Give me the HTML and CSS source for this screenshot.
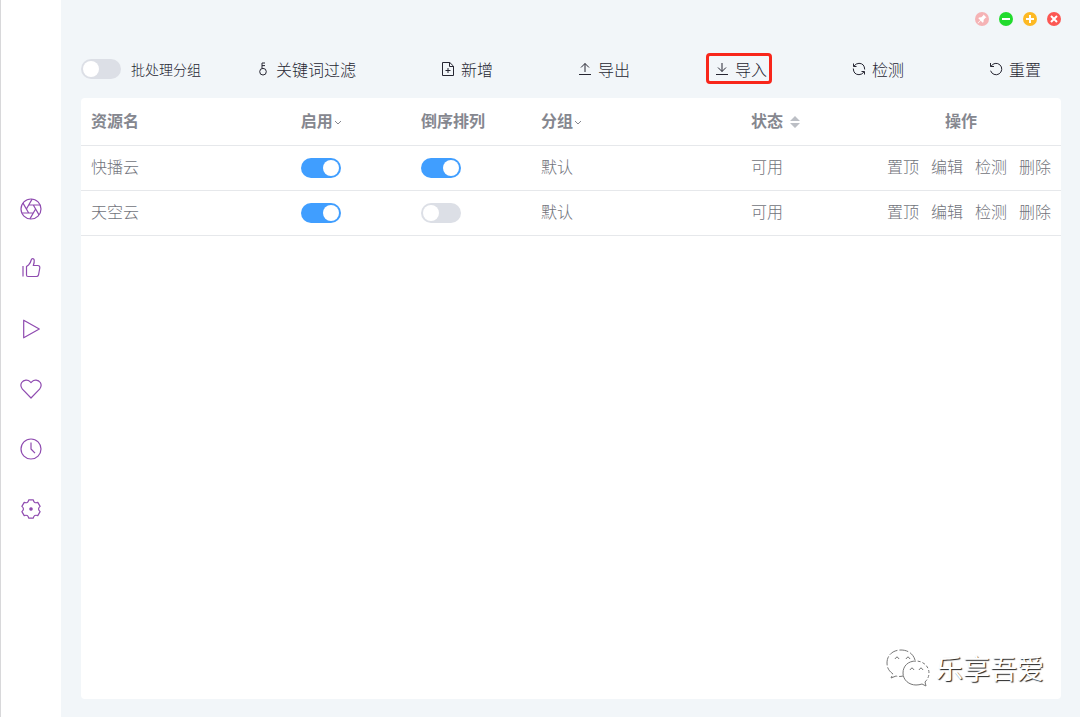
FILE: index.html
```html
<!DOCTYPE html>
<html lang="zh-CN">
<head>
<meta charset="utf-8">
<title>资源管理</title>
<link rel="stylesheet" href="styles.css">
</head>
<body>
<div class="app">
  <nav class="sidebar">
    <button class="nav-item" aria-label="浏览"><svg class="icon-lg" viewBox="-11 -11 22 22"><circle r="10"/><path d="M-2.300-4H9.100M2.300-4 8 5.900M4.600 0-1.100 9.900M2.300 4H-9.100M-2.300 4-8-5.900M-4.600 0 1.100-9.900"/></svg></button>
    <button class="nav-item" aria-label="推荐"><svg class="icon-lg" viewBox="0 0 22 22"><path d="M3 8v10.500M6.500 8.500v8.500q0 1.500 1.500 1.500h8.500q1.500 0 2-1.500l1.300-7q.2-2.500-2-2.500h-4.500q1.200-3 .9-5.500-.3-1.400-1.500-1.400-1.200 0-1.500 1.400-.7 3.300-2.700 5z"/></svg></button>
    <button class="nav-item" aria-label="播放"><svg class="icon-lg" viewBox="0 0 22 22"><path d="M3.700 2.200v17.600L19.300 11z"/></svg></button>
    <button class="nav-item" aria-label="收藏"><svg class="icon-lg" viewBox="0 0 22 22"><path d="M11 20 2.400 11.200C.7 9 .5 6.500 1.700 4.500c2-3 6.300-3.200 8.300-.8l1 1 1-1c2-2.400 6.300-2.200 8.300.8 1.200 2 1 4.500-.7 6.700z"/></svg></button>
    <button class="nav-item" aria-label="历史"><svg class="icon-lg" viewBox="0 0 22 22"><circle cx="11" cy="11" r="10"/><path d="M11 4.500V11l4 4.200"/></svg></button>
    <button class="nav-item" aria-label="设置"><svg class="icon-lg" viewBox="-11 -11 22 22"><path d="M9.100 2.600Q6 0 9.100-2.600L6.800-6.600Q3-5.200 2.300-9.200H-2.300Q-3-5.200-6.800-6.600L-9.100-2.600Q-6 0-9.100 2.600L-6.800 6.600Q-3 5.200-2.300 9.200H2.300Q3 5.200 6.800 6.600z"/><circle class="solid" r="1.200"/></svg></button>
  </nav>
  <main class="main">
    <header class="titlebar">
      <button class="win pin" aria-label="固定"><svg viewBox="0 0 14 14"><path class="white-fill" d="m8.500 2.500 3 3-1 .3-1.800 1.900-.2 2.300-.8.700-2-2L3 11.400l-.4-.4 2.700-2.700-2-2 .7-.8 2.300-.2 1.900-1.800z"/></svg></button>
      <button class="win min" aria-label="最小化"><svg viewBox="0 0 14 14"><path d="M3 7h8"/></svg></button>
      <button class="win max" aria-label="最大化"><svg viewBox="0 0 14 14"><path d="M3 7h8M7 3v8"/></svg></button>
      <button class="win close" aria-label="关闭"><svg viewBox="0 0 14 14"><path d="m4 4 6 6m0-6-6 6"/></svg></button>
    </header>
    <div class="toolbar">
      <label class="batch"><input class="switch" type="checkbox"><span>批处理分组</span></label>
      <button class="tool"><svg class="icon" viewBox="0 0 14 14"><circle cx="7" cy="9.700" r="3.300"/><path d="M6 6.500V1h3M6 3.600h3"/></svg>关键词过滤</button>
      <button class="tool"><svg class="icon" viewBox="0 0 14 14"><path d="M1.500.5h7.300l3.700 3.700v9.300h-11zM8.500.5v4h4M7 6v5M4.500 8.500h5"/></svg>新增</button>
      <button class="tool"><svg class="icon" viewBox="0 0 14 14"><path d="M1 12.500h12M7 10V1.500M3 5.500l4-4 4 4"/></svg>导出</button>
      <button class="tool marked"><svg class="icon" viewBox="0 0 14 14"><path d="M1 12.500h12M7 1v8.500M3 5.500l4 4 4-4"/></svg>导入</button>
      <button class="tool"><svg class="icon" viewBox="0 0 14 14"><path d="M1.500 1.500v3h3M1.800 4.300Q4 1.300 7 1.300q5.500.2 5.700 6.200M12.500 12.500v-3h-3M12.200 9.700Q10 12.700 7 12.700 1.500 12.500 1.300 6.500"/></svg>检测</button>
      <button class="tool"><svg class="icon" viewBox="0 0 14 14"><path d="M1.500 1v3.500H5M2 4.400a5.700 5.700 0 1 1-.4 4.300"/></svg>重置</button>
    </div>
    <section class="card">
      <table class="sources">
        <colgroup><col class="wide"><col class="mid"><col class="mid"><col class="wide"><col class="mid"><col class="ops"></colgroup>
        <thead>
          <tr>
            <th>资源名</th>
            <th>启用<svg class="chevron" viewBox="0 0 8 8"><path d="m1 2 3 3 3-3"/></svg></th>
            <th>倒序排列</th>
            <th>分组<svg class="chevron" viewBox="0 0 8 8"><path d="m1 2 3 3 3-3"/></svg></th>
            <th>状态<svg class="sort" viewBox="0 0 10 12"><path d="m0 5 5-5 5 5zM0 7l5 5 5-5z"/></svg></th>
            <th class="center">操作</th>
          </tr>
        </thead>
        <tbody>
          <tr>
            <td>快播云</td>
            <td><input class="switch" type="checkbox" aria-label="启用快播云" checked></td>
            <td><input class="switch" type="checkbox" aria-label="倒序排列快播云" checked></td>
            <td>默认</td>
            <td>可用</td>
            <td><div class="actions"><button>置顶</button><button>编辑</button><button>检测</button><button>删除</button></div></td>
          </tr>
          <tr>
            <td>天空云</td>
            <td><input class="switch" type="checkbox" aria-label="启用天空云" checked></td>
            <td><input class="switch" type="checkbox" aria-label="倒序排列天空云"></td>
            <td>默认</td>
            <td>可用</td>
            <td><div class="actions"><button>置顶</button><button>编辑</button><button>检测</button><button>删除</button></div></td>
          </tr>
        </tbody>
      </table>
      <div class="watermark">
        <svg viewBox="0 0 44 38"><path stroke-dasharray="9 2" d="M29 11C27 4 21 1 15 1 7 1 1 6 1 14c0 5 2 8 6 11l-2 4 5-2q3 1 7 0"/><path d="M30 12c-8 0-13 5-13 12s6 12 13 12q3 0 6-1l4 2-1-4M9 10q2-4 4 0M20 10q2-4 4 0M24 21q2-4 4 0M33 21q2-4 4 0"/><path stroke-dasharray="3 2" d="M39 33q4-4 4-9c0-7-6-12-13-12"/></svg>
        <span>乐享吾爱</span>
      </div>
    </section>
  </main>
</div>
</body>
</html>
```
FILE: styles.css
```css
* { box-sizing: border-box; }

body {
  margin: 0;
  background: #f2f6f9;
  color: #85878f;
  font: 16px/24px "Noto Sans CJK SC", sans-serif;
}

button {
  padding: 0;
  border: 0;
  background: none;
  color: inherit;
  font: inherit;
  cursor: pointer;
}

svg {
  display: block;
  fill: none;
  stroke: currentColor;
}

.app {
  display: flex;
  min-height: 100vh;
}

.sidebar {
  display: flex;
  flex: none;
  flex-direction: column;
  justify-content: center;
  width: 61px;
  border-left: 1px solid #d8d8da;
  background: #fff;
  color: #8f4bb0;
}

.nav-item {
  display: grid;
  place-items: center;
  height: 60px;
}

.icon-lg {
  width: 22px;
  height: 22px;
  stroke-linejoin: round;
  stroke-width: 1.2;
}

.solid { fill: currentColor; }

.main {
  display: flex;
  flex: 1;
  flex-direction: column;
  min-width: 0;
  padding: 0 19px 18px 20px;
}

.titlebar {
  display: flex;
  justify-content: flex-end;
  align-items: center;
  gap: 10px;
  height: 38px;
}

.win {
  width: 14px;
  height: 14px;
  border-radius: 50%;
  color: #fff;
}

.win svg { stroke-width: 2; }
.pin { background: #f5b3b5; }
.min { background: #21db2d; }
.max { background: #fdb924; }
.close { background: #fc5753; }
.win .white-fill { fill: #fff; stroke: none; }

.toolbar {
  display: flex;
  justify-content: space-between;
  align-items: center;
  height: 60px;
  padding: 2px 20px 0 0;
  color: #262632;
  font-weight: 300;
}

.batch {
  display: flex;
  align-items: center;
  gap: 10px;
  margin-right: -30px;
  font-size: 14px;
}

.batch span { line-height: 20px; }

.tool {
  position: relative;
  display: flex;
  align-items: center;
  gap: 6px;
}

.icon {
  width: 14px;
  height: 14px;
}

.marked::after {
  position: absolute;
  inset: -4px -5px -3px -9px;
  border: 3px solid #f8261b;
  border-radius: 4px;
  content: "";
}

.switch {
  display: block;
  width: 40px;
  height: 20px;
  margin: 0;
  padding: 2px;
  border-radius: 10px;
  background: #dcdfe6;
  appearance: none;
}

.switch::before {
  display: block;
  width: 16px;
  height: 16px;
  border-radius: 50%;
  background: #fff;
  content: "";
}

.switch:checked { background: #409eff; }
.switch:checked::before { margin-left: auto; }

.card {
  position: relative;
  flex: 1;
  border-radius: 4px;
  background: #fff;
}

.sources {
  width: 100%;
  border-collapse: collapse;
  table-layout: fixed;
}

.wide { width: 21.4%; }
.mid { width: 12.25%; }
.ops { width: 20.4%; }

th,
td {
  height: 45px;
  padding: 0 10px 3px;
  border-bottom: 1px solid #e6e8eb;
  text-align: left;
  white-space: nowrap;
}

th { height: 47px; }

td {
  color: #71737b;
  font-weight: 300;
}

td .switch { margin-top: 4px; }
th.center { text-align: center; }

.chevron,
.sort {
  display: inline-block;
  width: 8px;
  height: 8px;
  margin-left: 1px;
}

.sort {
  width: 10px;
  height: 12px;
  margin-left: 7px;
  fill: #bcbfc5;
  stroke: none;
  vertical-align: -1px;
}

.actions {
  display: flex;
  justify-content: flex-end;
  gap: 12px;
}

.watermark {
  position: absolute;
  right: 17px;
  bottom: 11px;
  display: flex;
  align-items: center;
  gap: 6px;
  color: #fff;
  font-size: 27px;
  line-height: 40px;
  text-shadow: 1px 1px 1px #222;
}

.watermark svg {
  width: 44px;
  height: 38px;
  color: #777;
}
```
